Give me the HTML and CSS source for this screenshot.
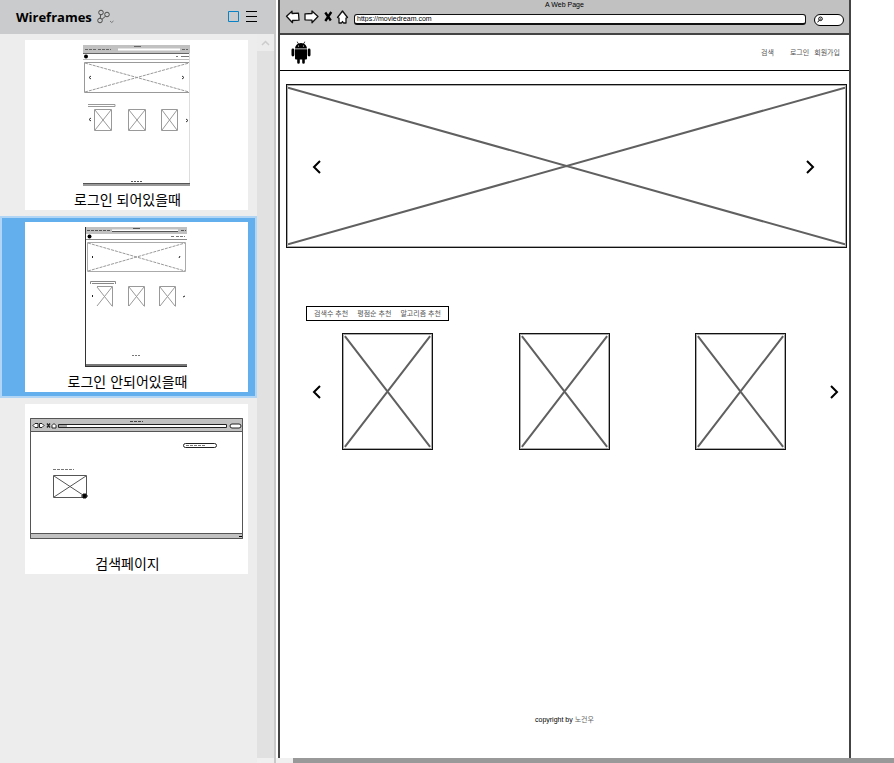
FILE: index.html
```html
<!DOCTYPE html>
<html lang="ko">
<head>
<meta charset="utf-8">
<title>Wireframes</title>
<link rel="stylesheet" href="styles.css">
</head>
<body>
<div class="app">
  <aside class="sidebar">
    <header class="sidebar-head">
      <h1>Wireframes</h1>
      <button class="icon-btn" aria-label="Branches">
        <svg width="18" height="16" viewBox="0 0 18 16" fill="none" stroke="#4a4a4a"><circle cx="4" cy="3.5" r="2.3"/><circle cx="3" cy="11.500" r="2.300"/><circle cx="10" cy="5.500" r="2.300"/><path d="M3.700 5.800 3.200 9.200M5 10.300 8.500 7.200" /><path d="M13 12l1.700 1.500L16.500 12" stroke="#777"/></svg>
      </button>
      <span class="spacer"></span>
      <button class="icon-btn" aria-label="Thumbnails"><svg width="12" height="12" viewBox="0 0 12 12"><path d="M.5.5h10v10H.5z" fill="none" stroke="#0a82c8"/></svg></button>
      <button class="icon-btn menu" aria-label="Menu"><svg width="12" height="12" viewBox="0 0 12 12"><path d="M0 .5h11M0 5.500h11M0 10.500h11" stroke="#000"/></svg></button>
    </header>
    <div class="sidebar-body">
      <div class="list">
        <a class="item" href="#logged-in">
          <span class="card">
            <svg class="thumb" width="108" height="142" viewBox="0 0 108 142" fill="none" stroke="#999">
              <path d="M0 0h107v8H0z" fill="#c1c1c1" stroke="none"/><path d="M35 4.500h62" stroke="#fff" stroke-width="2"/><path d="M0 8.500h107M51 1.500h7" stroke="#666"/><path d="M2 4.500h11M15 4.500h13M99 4.500h6" stroke="#666" stroke-dasharray="3 1"/>
              <circle cx="3" cy="11.500" r="2" fill="#000" stroke="none"/><path d="M93 11.500h2M98 11.500h8" stroke="#777"/><path d="M0 14.500h107" stroke="#bbb"/>
              <path d="M1.500 17.500h105v30H1.500z" stroke="#999"/><path d="M2 18l104 29M2 47l104-29" stroke-dasharray="3 1"/><path d="M8 31l-2 1.500L8 34M99 31l2 1.500L99 34" stroke="#333"/>
              <path d="M5 59.500h27v2H5" stroke="#999"/><path d="M11.500 64.500h17v21h-17zM45.500 64.500h17v21h-17zM78.500 64.500h16v21h-16zM12 65l16 20M12 85l16-20M46 65l16 20M46 85l16-20M79 65l15 20M79 85l15-20"/><path d="M8 73l-2 1.500L8 76M103 74l2 1.500-2 1.500" stroke="#333"/>
              <path d="M48 136.500h11" stroke="#555" stroke-dasharray="2 1"/><path d="M0 139.500h107" stroke="#999" stroke-width="3"/><path d="M0 138.500h107" stroke="#555"/><path d="M106.500 8v130" stroke="#ddd"/>
            </svg>
            <span class="name">로그인 되어있을때</span>
          </span>
        </a>
        <a class="item selected" href="#logged-out" aria-current="page">
          <span class="card">
            <svg class="thumb" width="104" height="142" viewBox="0 0 104 142" fill="none" stroke="#999">
              <path d="M0 0h102v7H0z" fill="#c1c1c1" stroke="none"/><path d="M27 3.500h66" stroke="#fff" stroke-width="2"/><path d="M27 4.500h66M48 1.500h7" stroke="#555"/><path d="M2 3.500h11M14 3.500h12M96 3.500h5" stroke="#555" stroke-dasharray="3 1"/>
              <circle cx="4.500" cy="9.500" r="2" fill="#000" stroke="none"/><path d="M86 9.500h4M91 9.500h9" stroke="#777" stroke-dasharray="3 1"/><path d="M0 12.500h102" stroke="#888"/>
              <path d="M2.500 15.500h98v29h-98z" stroke="#aaa"/><path d="M3 16l97 28M3 44l97-28" stroke-dasharray="3 1"/><path d="M7.500 29v2M95 29l-1 2" stroke="#222"/>
              <path d="M5.500 57v-2.500h25V57M7 56.500h22" stroke="#888"/><path d="M12 59.500h15.500v20M43.500 79V59.500h16v20M74.500 79V59.500h16v20M12 60l15 19M12 79l15-19M44 60l15 19M44 79l15-19M75 60l15 19M75 79l15-19"/><path d="M7.500 68v2M100 69l-2 1" stroke="#222"/>
              <path d="M47 128.500h9" stroke="#777" stroke-dasharray="2 1"/><path d="M0 138.500h102" stroke="#777" stroke-width="3"/><path d="M.5 0v140M0 139.500h102" stroke="#333"/>
            </svg>
            <span class="name">로그인 안되어있을때</span>
          </span>
        </a>
        <a class="item" href="#search">
          <span class="card">
            <svg class="thumb" width="214" height="142" viewBox="0 0 214 142" fill="none" stroke="#555">
              <path d="M.5 9.500h212v120H.5z" fill="#fff"/><path d="M.5 9.500h212v13H.5zM.5 124.500h212v5H.5z" fill="#c1c1c1"/><path d="M100 12.500h13" stroke="#444" stroke-dasharray="3 1"/>
              <g fill="#fff" stroke="#222"><path d="M3 16.500l2-2h3v4H5zM14 16.500l-2-2H9.500v4H12zM22 16.500l2-2 2 2v2.500h-4zM28.500 15.500h168v3h-168z"/><rect x="200" y="15" width="11" height="4" rx="2"/><path d="M17 14.500l3 4M20 14.500l-3 4" stroke-width="1.300"/><path d="M29 17h8" stroke="#555"/></g>
              <rect x="153.500" y="34.500" width="33" height="4" rx="2" stroke="#222"/><path d="M156 36.500h20M23 60.500h21" stroke="#777" stroke-dasharray="3 1"/><path d="M23.500 66.500h33v22h-33zM24 67l32 21M24 88l32-21"/><path d="M53 85h3v4h-3zM52 86v2M57 86v2" fill="#000" stroke="#111"/><path d="M209 127.500h3" stroke="#000"/>
            </svg>
            <span class="name">검색페이지</span>
          </span>
        </a>
      </div>
      <div class="track"><button class="track-up" aria-label="Scroll up"><svg width="9" height="6" viewBox="0 0 9 6"><path d="M1 5l3.500-3.500L8 5" fill="none" stroke="#ccc" stroke-width="1.500"/></svg></button><span class="track-end"></span></div>
    </div>
  </aside>

  <main class="canvas">
    <div class="board">
      <div class="browser">
        <div class="browser-title">A Web Page</div>
        <div class="browser-bar">
          <svg width="64" height="16" viewBox="0 0 64 16" fill="#fff" stroke="#111" stroke-width="1.300" stroke-linejoin="round">
            <path d="M1.500 6.300l5.500-5v2.200l6.500-.3.500 7-6.500.3v2.200zM33 6.500 27 1v2.500l-7 .3v6l7 .4v2.600zM52.500 7.500l5-6.500 5 6.500-1.500.7v4.800h-2.500l-1-1.500-1 1.500h-2.500V8.200z"/>
            <path d="M40.300 2.500l5.500 8M46.300 2l-6 9" fill="none" stroke="#000" stroke-width="2.300"/>
          </svg>
          <input class="url" type="text" aria-label="Address" value="https://moviedream.com">
          <div class="find">
            <svg width="6" height="7" viewBox="0 0 6 7" fill="none" stroke="#000"><circle cx="3.500" cy="2.800" r="1.800"/><path d="M2 4.300.7 6.300M3 3h1"/></svg>
            <input type="text" aria-label="Search">
          </div>
        </div>
      </div>
      <nav class="nav">
        <a href="#home" aria-label="Home"><svg width="20" height="23" viewBox="0 0 20 23">
          <path d="M4 7.500C4.300 4.800 5.500 3.500 7 2.700L5.700.8l.5-.3 1.500 2a7 7 0 0 1 4.600 0l1.500-2 .5.300L13 2.700c1.500.8 2.700 2.100 3 4.800zM4 8.300h12v9.200a1 1 0 0 1-1 1h-1.200v3a1.200 1.200 0 0 1-2.600 0v-3H8.800v3a1.200 1.200 0 0 1-2.600 0v-3H5a1 1 0 0 1-1-1z"/><rect x=".5" y="7.500" width="2.800" height="8" rx="1.400"/><rect x="16.700" y="7.500" width="2.800" height="8" rx="1.400"/><circle cx="7.500" cy="5" r=".6" fill="#fff"/><circle cx="12.500" cy="5" r=".6" fill="#fff"/></svg></a>
        <div class="links"><a href="#search">검색</a><span class="account"><a href="#login">로그인</a><a href="#join">회원가입</a></span></div>
      </nav>
      <section class="banner">
        <svg class="cross" viewBox="0 0 100 100" preserveAspectRatio="none"><path d="M0 1 100 99M0 99 100 1"/></svg>
        <button class="arrow prev" aria-label="Previous banner"><svg width="10" height="14" viewBox="0 0 10 14"><path d="M8 1 2 7l6 6"/></svg></button>
        <button class="arrow next" aria-label="Next banner"><svg width="10" height="14" viewBox="0 0 10 14"><path d="M2 1l6 6-6 6"/></svg></button>
      </section>
      <div class="tabs"><a href="#views">검색수 추천</a><a href="#rating">평점순 추천</a><a href="#algorithm">알고리즘 추천</a></div>
      <section class="row">
        <button class="arrow" aria-label="Previous"><svg width="10" height="14" viewBox="0 0 10 14"><path d="M8 1 2 7l6 6"/></svg></button>
        <div class="posters">
          <div class="poster"><svg class="cross" viewBox="0 0 100 100" preserveAspectRatio="none"><path d="M1 1 99 99M1 99 99 1"/></svg></div>
          <div class="poster"><svg class="cross" viewBox="0 0 100 100" preserveAspectRatio="none"><path d="M1 1 99 99M1 99 99 1"/></svg></div>
          <div class="poster"><svg class="cross" viewBox="0 0 100 100" preserveAspectRatio="none"><path d="M1 1 99 99M1 99 99 1"/></svg></div>
        </div>
        <button class="arrow" aria-label="Next"><svg width="10" height="14" viewBox="0 0 10 14"><path d="M2 1l6 6-6 6"/></svg></button>
      </section>
      <footer class="foot">copyright by <span>노건우</span></footer>
    </div>
    <div class="hscroll"><span></span></div>
  </main>
</div>
</body>
</html>
```
FILE: styles.css
```css
* { box-sizing: border-box; }
body { margin: 0; background: #fff; color: #000; font-family: "Liberation Sans", "Noto Sans CJK KR", sans-serif; }
a { color: inherit; text-decoration: none; }
button { padding: 0; border: 0; background: none; color: inherit; }
input { padding: 0; border: 0; outline: 0; background: none; font: inherit; min-width: 0; }
svg { display: block; flex: none; }

.app { display: flex; min-height: 100vh; }

.sidebar { flex: none; width: 276px; display: flex; flex-direction: column; background: #ededed; border-right: 2px solid #c9c9c9; }
.sidebar-head { display: flex; align-items: center; height: 34px; padding: 0 16px; background: #cacbcc; }
.sidebar-head h1 { margin: 0 5px 0 0; font: 700 13px/20px "Open Sans", "Noto Sans", sans-serif; }
.spacer { flex: 1; }
.menu { margin-left: 6px; }
.sidebar-body { flex: 1; display: flex; }
.list { flex: 1; }
.item { display: block; padding: 4px 7px 4px 23px; border: 2px solid transparent; }
.item.selected { background: #63aeed; border-color: #b0d5f5; }
.card { display: flex; flex-direction: column; align-items: center; height: 170px; padding-top: 5px; background: #fff; }
.name { margin-top: 2px; padding-right: 18px; font: 14px/20px "Noto Sans CJK KR", sans-serif; }
.track { width: 17px; display: flex; flex-direction: column; justify-content: space-between; background: #e1e1e1; }
.track-up { display: grid; place-items: center; height: 17px; background: #ececec; }
.track-end { height: 5px; background: #f0f0f0; }

.canvas { flex: 1; min-width: 0; display: flex; flex-direction: column; }
.board { flex: 1; display: flex; flex-direction: column; margin: 0 43px 0 2px; border: solid #444; border-width: 0 2px; font-size: 7px; line-height: 10px; }
.browser { height: 35px; background: #c1c1c1; border-bottom: 2px solid #444; }
.browser-title { text-align: center; }
.browser-bar { display: flex; align-items: center; gap: 8px; padding: 0 5px; height: 16px; }
.url { flex: 1; height: 11px; margin: 2px 0 0 -3px; padding-left: 2px; background: #fff; border: 1px solid #111; border-bottom-width: 2px; border-radius: 3px; line-height: 8px; }
.find { display: flex; align-items: center; width: 30px; height: 12px; margin-top: 3px; padding-left: 2px; background: #fff; border: 1px solid #000; border-radius: 6px; }
.find input { width: 18px; }
.nav { display: flex; align-items: center; justify-content: space-between; height: 36px; padding: 0 9px 0 11px; border-bottom: 1px solid #000; }
.links { display: flex; gap: 16px; color: #555; }
.account { display: flex; gap: 5px; }
.banner, .poster { border: 1px solid #111; box-shadow: inset 0 0 0 1px #aaa; }
.banner { position: relative; height: 164px; margin: 13px 2px 0 6px; padding: 1px; }
.cross { width: 100%; height: 100%; fill: none; stroke: #606060; }
.cross path { vector-effect: non-scaling-stroke; stroke-width: 2px; }
.arrow { flex: none; width: 10px; height: 14px; }
.arrow path { fill: none; stroke: #000; stroke-width: 2; }
.prev, .next { position: absolute; top: 75px; }
.prev { left: 25px; }
.next { right: 31px; }
.tabs { display: flex; justify-content: space-between; align-self: flex-start; width: 143px; height: 15px; margin: 58px 0 0 26px; padding: 2px 7px; border: 1px solid #000; color: #555; }
.row { display: flex; align-items: center; margin: 12px 10px 0 32px; }
.posters { flex: 1; display: flex; justify-content: space-between; margin: 0 43px 0 20px; }
.poster { width: 91px; height: 117px; padding: 1px; }
.foot { margin: auto 0 33px; text-align: center; }
.foot span { color: #666; }
.hscroll { display: flex; height: 5px; padding-left: 17px; background: #f0f0f0; }
.hscroll span { flex: 1; background: #999; }
```
